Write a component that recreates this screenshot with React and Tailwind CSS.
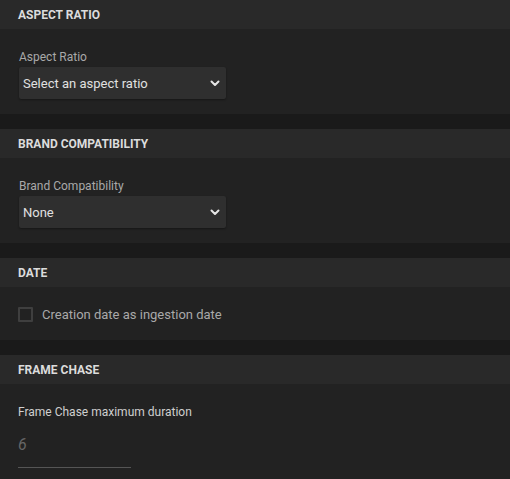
import { useState } from 'react';

function Section({ title, children, bodyClass }) {
  return (
    <div className="mb-[15px] last:mb-0">
      <div className="h-[29px] bg-[#292929] px-[18px] flex items-center">
        <span className="text-[12px] font-bold text-[#dcdcdc] uppercase">{title}</span>
      </div>
      <div className={'bg-[#222222] px-[18px] ' + bodyClass}>{children}</div>
    </div>
  );
}

function Chevron() {
  return (
    <svg width="10" height="7" viewBox="0 0 10 7" className="shrink-0">
      <path d="M1.5 1.5 L5 5 L8.5 1.5" fill="none" stroke="#e6e6e6" strokeWidth="2" strokeLinecap="round" strokeLinejoin="round" />
    </svg>
  );
}

function SelectBox({ label, value }) {
  return (
    <div>
      <div className="text-[12px] leading-[16px] text-[#a9a9a9] pl-px">{label}</div>
      <div className="mt-[2px] w-[207px] h-[32px] bg-[#2f2f2f] rounded-[2px] shadow-[0_1px_2px_rgba(0,0,0,0.35)] flex items-center justify-between pl-[4px] pr-[6px] ml-px">
        <span className="text-[13px] text-[#e0e0e0] pt-px">{value}</span>
        <Chevron />
      </div>
    </div>
  );
}

export default function App() {
  const [checked, setChecked] = useState(false);
  const [duration, setDuration] = useState('');

  return (
    <div className="w-[510px] h-[479px] overflow-hidden bg-[#1a1a1a]" style={{ fontFamily: 'Roboto, "Noto Sans", sans-serif' }}>
      <Section title="Aspect Ratio" bodyClass="pt-[20px] pb-[15px]">
        <SelectBox label="Aspect Ratio" value="Select an aspect ratio" />
      </Section>
      <Section title="Brand Compatibility" bodyClass="pt-[20px] pb-[15px]">
        <SelectBox label="Brand Compatibility" value="None" />
      </Section>
      <Section title="Date" bodyClass="pt-[20px] pb-[18px]">
        <label className="flex items-center gap-[9px] h-[15px] cursor-pointer" onClick={() => setChecked(!checked)}>
          <span className="w-[15px] h-[15px] border-2 border-[#3f3f3f] rounded-[1px] shrink-0" />
          <span className="text-[13px] text-[#a9a9a9]">Creation date as ingestion date</span>
        </label>
      </Section>
      <Section title="Frame Chase" bodyClass="pt-[20px] pb-[20px]">
        <div className="text-[12px] leading-[16px] text-[#cfcfcf]">Frame Chase maximum duration</div>
        <input
          value={duration}
          onChange={(e) => setDuration(e.target.value)}
          placeholder="6"
          className="block mt-[10px] w-[113px] h-[38px] pb-[8px] bg-transparent border-b border-[#555555] text-[16px] italic text-[#cccccc] placeholder:text-[#666666] outline-none"
        />
      </Section>
    </div>
  );
}
